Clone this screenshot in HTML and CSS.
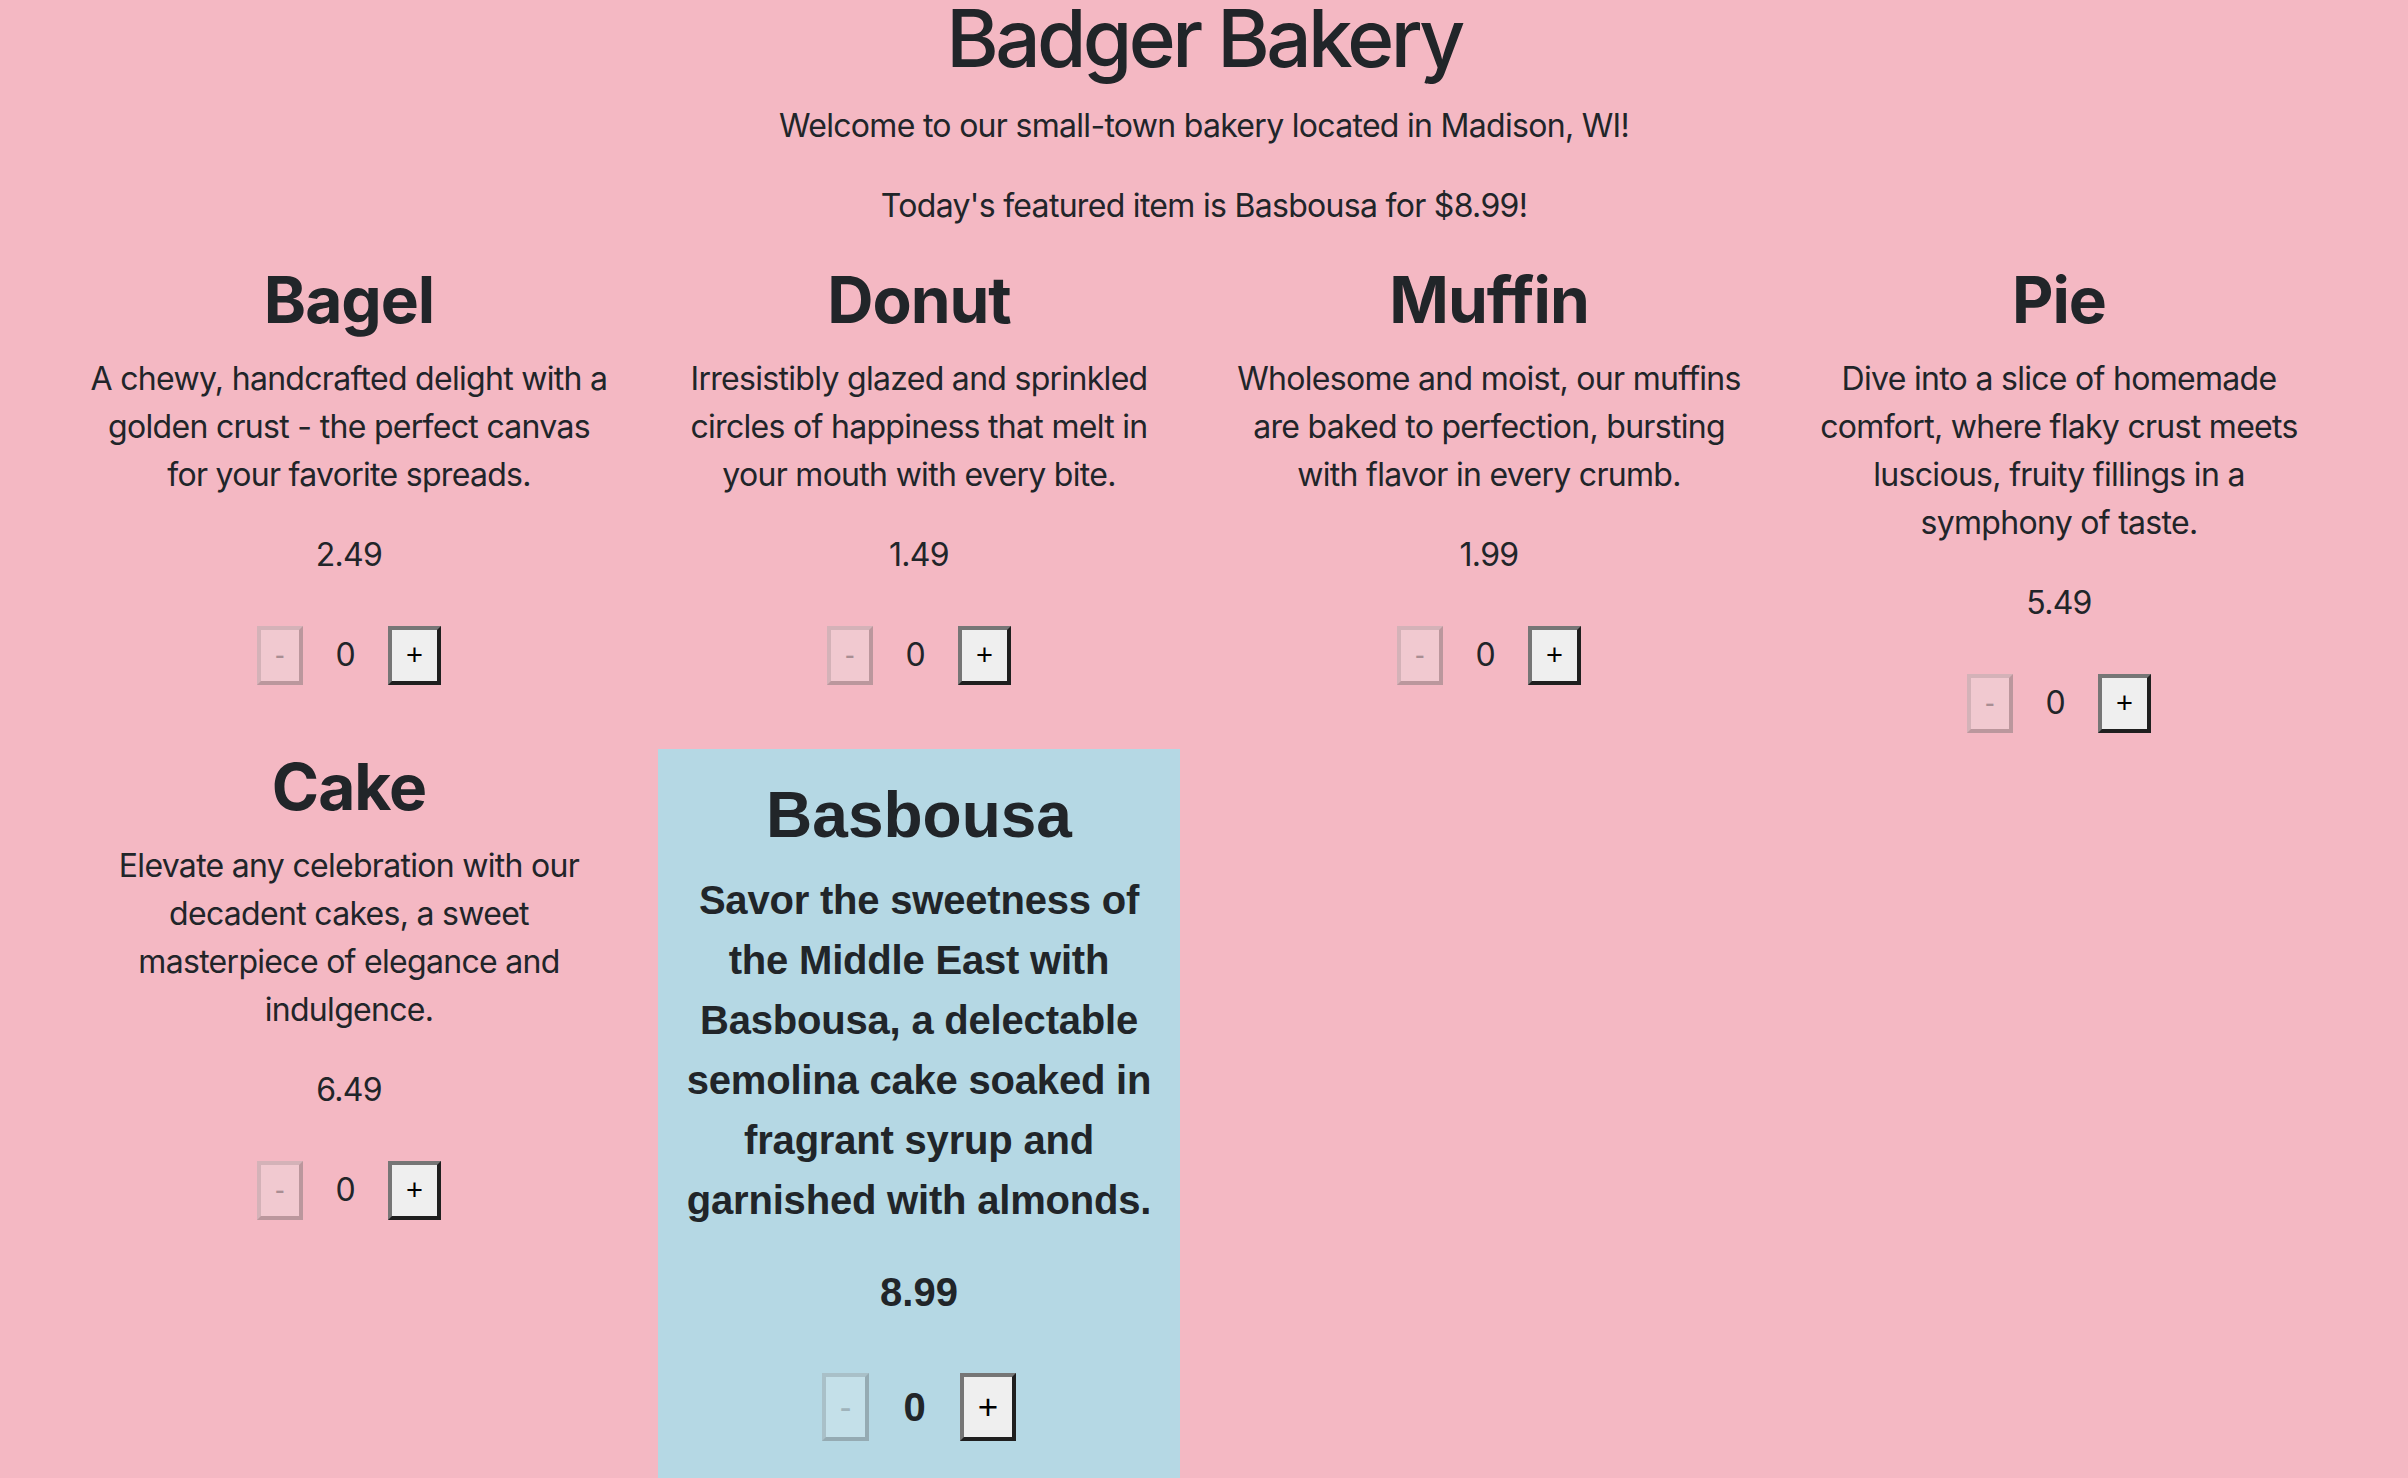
FILE: index.html
```html
<!DOCTYPE html>
<html lang="en">
<head>
<meta charset="utf-8">
<title>Badger Bakery</title>
<link rel="stylesheet" href="styles.css">
</head>
<body>
<div class="page">
  <header class="intro">
    <h1 class="title">Badger Bakery</h1>
    <p class="lead">Welcome to our small-town bakery located in Madison, WI!</p>
    <p class="lead">Today's featured item is Basbousa for $8.99!</p>
  </header>
  <main class="grid">
    <section class="item">
      <h2 class="item-name">Bagel</h2>
      <p class="item-desc">A chewy, handcrafted delight with a golden crust - the perfect canvas for your favorite spreads.</p>
      <p class="item-price">2.49</p>
      <div class="qty">
        <button class="qty-btn" disabled>-</button>
        <span class="qty-count">0</span>
        <button class="qty-btn">+</button>
      </div>
    </section>
    <section class="item">
      <h2 class="item-name">Donut</h2>
      <p class="item-desc">Irresistibly glazed and sprinkled circles of happiness that melt in your mouth with every bite.</p>
      <p class="item-price">1.49</p>
      <div class="qty">
        <button class="qty-btn" disabled>-</button>
        <span class="qty-count">0</span>
        <button class="qty-btn">+</button>
      </div>
    </section>
    <section class="item">
      <h2 class="item-name">Muffin</h2>
      <p class="item-desc">Wholesome and moist, our muffins are baked to perfection, bursting with flavor in every crumb.</p>
      <p class="item-price">1.99</p>
      <div class="qty">
        <button class="qty-btn" disabled>-</button>
        <span class="qty-count">0</span>
        <button class="qty-btn">+</button>
      </div>
    </section>
    <section class="item">
      <h2 class="item-name">Pie</h2>
      <p class="item-desc">Dive into a slice of homemade comfort, where flaky crust meets luscious, fruity fillings in a symphony of taste.</p>
      <p class="item-price">5.49</p>
      <div class="qty">
        <button class="qty-btn" disabled>-</button>
        <span class="qty-count">0</span>
        <button class="qty-btn">+</button>
      </div>
    </section>
    <section class="item">
      <h2 class="item-name">Cake</h2>
      <p class="item-desc">Elevate any celebration with our decadent cakes, a sweet masterpiece of elegance and indulgence.</p>
      <p class="item-price">6.49</p>
      <div class="qty">
        <button class="qty-btn" disabled>-</button>
        <span class="qty-count">0</span>
        <button class="qty-btn">+</button>
      </div>
    </section>
    <section class="item item-featured">
      <div class="featured-card">
        <h2 class="item-name">Basbousa</h2>
        <p class="item-desc">Savor the sweetness of the Middle East with Basbousa, a delectable semolina cake soaked in fragrant syrup and garnished with almonds.</p>
        <p class="item-price">8.99</p>
        <div class="qty">
          <button class="qty-btn" disabled>-</button>
          <span class="qty-count">0</span>
          <button class="qty-btn">+</button>
        </div>
      </div>
    </section>
  </main>
</div>
</body>
</html>
```

FILE: styles.css
```css
* {
  box-sizing: border-box;
}

html, body {
  margin: 0;
  padding: 0;
}

body {
  background: #f4b8c3;
  color: #212529;
  font-family: "Inter", "Noto Sans", sans-serif;
  font-size: 32px;
  line-height: 1.5;
  letter-spacing: -0.7px;
  min-height: 1478px;
  overflow: hidden;
}

.page {
  width: 2280px;
  margin: 0 auto;
}

.intro {
  text-align: center;
}

.title {
  margin: 0 0 28px;
  padding-top: 2px;
  font-size: 80px;
  font-weight: 500;
  line-height: 72px;
  letter-spacing: -3.6px;
}

.lead {
  margin: 0 0 32px;
}

.grid {
  display: grid;
  grid-template-columns: repeat(4, 1fr);
  align-items: start;
}

.item {
  padding: 0 24px;
  text-align: center;
}

.item-name {
  margin: 0 0 16px;
  font-size: 64px;
  font-weight: 700;
  line-height: 1.2;
  letter-spacing: -1px;
}

.item-desc {
  margin: 0 0 32px;
}

.item-price {
  margin: 0 0 32px;
}

.qty {
  display: flex;
  justify-content: center;
  align-items: center;
  gap: 33px;
  margin: 47px 0 16px;
}

.qty-count {
  line-height: 1;
}

.qty-btn {
  height: 59px;
  padding: 0 14px;
  font-family: "Liberation Sans", Arial, sans-serif;
  font-size: 29px;
  line-height: 1;
  letter-spacing: 0;
  color: #000;
  background: #efefef;
  border-width: 4px;
  border-style: solid;
  border-color: #767676 #1f1f1f #1f1f1f #767676;
  border-radius: 0;
}

.qty-btn:disabled {
  color: #a98e93;
  background: #f1c9d0;
  border-color: #d4b2b8 #bb979d #bb979d #d4b2b8;
}

.featured-card {
  background: #b5d8e4;
  padding: 28px 24px 40px;
  min-height: 800px;
  font-family: "Liberation Sans", Arial, sans-serif;
  font-size: 40px;
  font-weight: 700;
  letter-spacing: 0;
}

.featured-card .item-name {
  letter-spacing: 0;
}

.featured-card .item-desc {
  letter-spacing: -0.2px;
  margin-bottom: 32px;
}

.featured-card .qty {
  gap: 34px;
  margin-top: 51px;
}

.featured-card .qty-btn {
  height: 68px;
  font-size: 35px;
}

.featured-card .qty-btn:disabled {
  color: #9fb3bb;
  background: #c4e0e9;
  border-color: #a9c0c8 #95abb3 #95abb3 #a9c0c8;
}
```
